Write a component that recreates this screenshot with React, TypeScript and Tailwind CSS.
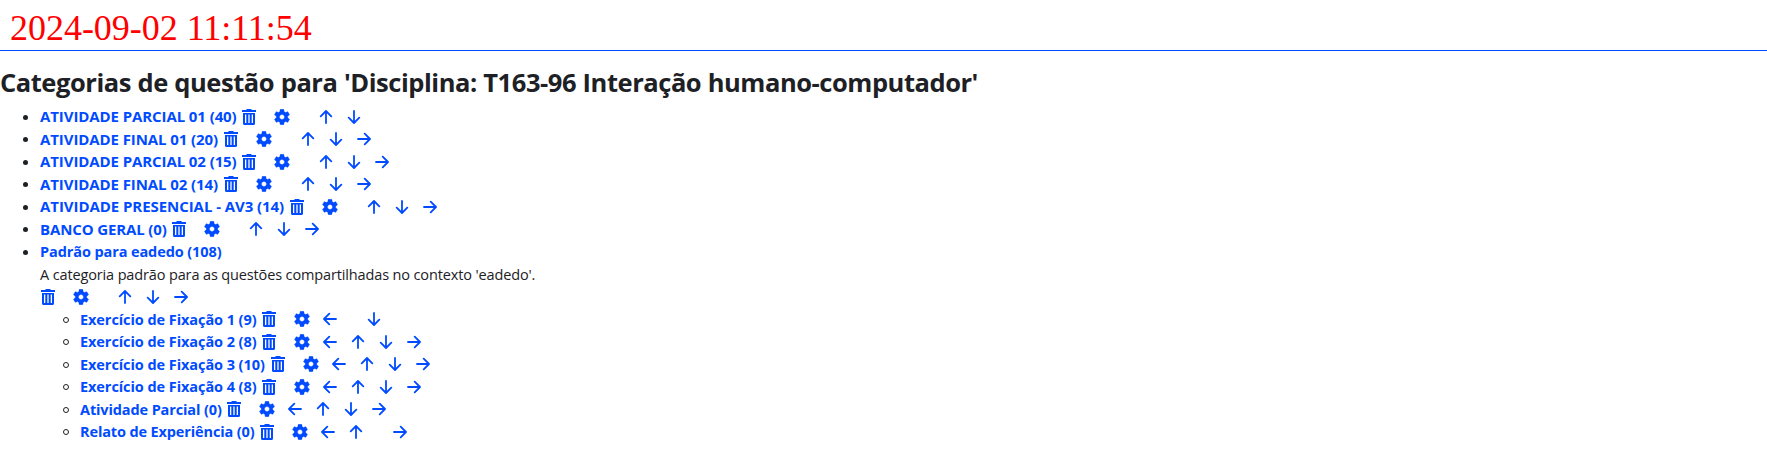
import React from "react";

const TRASH = "M4.500 0h5v1H14v2H0V1h4.500zM1 4h12v10.500a1.500 1.500 0 0 1-1.500 1.500h-9A1.500 1.500 0 0 1 1 14.500zM3 5.500V14H4.300V5.500zM6.350 5.500V14H7.650V5.500zM9.700 5.500V14H11V5.500z";
const GEAR = "M19.14 12.94c.04-.3.06-.61.06-.94 0-.32-.02-.64-.07-.94l2.030-1.580c.18-.14.23-.41.12-.61l-1.920-3.320c-.12-.22-.37-.29-.59-.22l-2.390.96c-.5-.38-1.030-.7-1.620-.94l-.36-2.540c-.04-.24-.24-.41-.48-.41h-3.840c-.24 0-.43.17-.47.41l-.36 2.540c-.59.24-1.130.57-1.620.94l-2.390-.96c-.22-.08-.47 0-.59.22L2.740 8.870c-.12.21-.08.47.12.61l2.030 1.580c-.05.3-.09.63-.09.94s.02.64.07.94l-2.030 1.580c-.18.14-.23.41-.12.61l1.920 3.320c.12.22.37.29.59.22l2.390-.96c.5.38 1.030.7 1.620.94l.36 2.540c.05.24.24.41.48.41h3.840c.24 0 .44-.17.47-.41l.36-2.540c.59-.24 1.130-.56 1.620-.94l2.390.96c.22.08.47 0 .59-.22l1.920-3.320c.12-.22.07-.47-.12-.61l-2.010-1.580zM12 15.100c-1.700 0-3.100-1.400-3.100-3.100s1.400-3.100 3.100-3.100 3.100 1.400 3.100 3.100-1.400 3.100-3.100 3.100z";

const ROTATION: Record<string, string> = {
  U: "",
  R: "rotate-90",
  D: "rotate-180",
  L: "-rotate-90",
};

/* Each move is U, D, L or R; "_" keeps the narrow gap of an unavailable move. */
function Actions({ moves }: { moves: string }) {
  return (
    <span className="flex h-full items-center text-[#004bff]">
      <span className="w-[26.5px] pl-px">
        <svg viewBox="0 0 14 16" className="h-[16px] w-[14px]" fill="currentColor" fillRule="evenodd">
          <path d={TRASH} />
        </svg>
      </span>
      <span className="mr-[0.5px] flex w-7 justify-center">
        <svg viewBox="2 2 20 20" className="h-[16px] w-[16px]" fill="currentColor" stroke="currentColor" strokeWidth="0.4">
          <path d={GEAR} />
        </svg>
      </span>
      {moves.split("").map((m, i) =>
        m === "_" ? (
          <span key={i} className="w-4" />
        ) : (
          <span key={i} className="flex w-7 justify-center">
            <svg viewBox="0 0 14 14" className={`h-3.5 w-3.5 ${ROTATION[m]}`} fill="none" stroke="currentColor" strokeWidth="1.8" strokeLinecap="round" strokeLinejoin="round">
              <path d="M7 13V1.200M1.700 6.300 7 1l5.300 5.300" />
            </svg>
          </span>
        ),
      )}
    </span>
  );
}

type Item = { label: string; box: string; moves?: string };

const MAIN: Item[] = [
  { label: "ATIVIDADE PARCIAL 01 (40)", box: "w-[201px] tracking-[-0.09px]", moves: "_UD" },
  { label: "ATIVIDADE FINAL 01 (20)", box: "w-[183px] tracking-[-0.09px]", moves: "_UDR" },
  { label: "ATIVIDADE PARCIAL 02 (15)", box: "w-[201px] tracking-[-0.09px]", moves: "_UDR" },
  { label: "ATIVIDADE FINAL 02 (14)", box: "w-[183px] tracking-[-0.09px]", moves: "_UDR" },
  { label: "ATIVIDADE PRESENCIAL - AV3 (14)", box: "w-[249px] tracking-[-0.06px]", moves: "_UDR" },
  { label: "BANCO GERAL (0)", box: "w-[131px] tracking-[-0.13px]", moves: "_UDR" },
  { label: "Padrão para eadedo (108)", box: "w-[187px] pt-[2px] text-[14.5px] tracking-[-0.1px]" },
];

const NESTED: Item[] = [
  { label: "Exercício de Fixação 1 (9)", box: "w-[181px] pt-[2px] text-[14.5px] tracking-[-0.07px]", moves: "L_D" },
  { label: "Exercício de Fixação 2 (8)", box: "w-[181px] pt-[2px] text-[14.5px] tracking-[-0.07px]", moves: "LUDR" },
  { label: "Exercício de Fixação 3 (10)", box: "w-[190px] pt-[2px] text-[14.5px] tracking-[-0.07px]", moves: "LUDR" },
  { label: "Exercício de Fixação 4 (8)", box: "w-[181px] pt-[2px] text-[14.5px] tracking-[-0.07px]", moves: "LUDR" },
  { label: "Atividade Parcial (0)", box: "w-[146px] pt-[2px] text-[14.5px] tracking-[-0.12px]", moves: "LUDR" },
  { label: "Relato de Experiência (0)", box: "w-[179px] pt-[2px] text-[14.5px] tracking-[-0.13px]", moves: "LU_R" },
];

function Row({ item, nested }: { item: Item; nested?: boolean }) {
  return (
    <li className="flex h-[22.5px] items-center">
      <span className="flex w-10 shrink-0 items-center pl-[23px] pt-px">
        <span className={nested ? "h-1.5 w-1.5 rounded-full border border-[#1d2125]" : "h-[5px] w-[5px] rounded-full bg-[#1d2125]"} />
      </span>
      <a className={`shrink-0 whitespace-nowrap font-bold text-[#004bff] ${item.box}`}>{item.label}</a>
      {item.moves && <Actions moves={item.moves} />}
    </li>
  );
}

export default function App() {
  return (
    <div className="h-[475px] w-full overflow-hidden bg-white font-['Open_Sans','Noto_Sans',sans-serif] text-[15px] leading-[22.5px] text-[#1d2125]">
      <header className="h-[51px] border-b border-[#004bff] pl-[10px] pt-[8px] font-['Liberation_Serif',serif] text-[36px] leading-[41px] tracking-[-0.03px] text-[#ff0000]">
        2024-09-02 11:11:54
      </header>
      <h2 className="mt-4 h-[38.4px] whitespace-nowrap text-[25.5px] font-bold leading-[31px] tracking-[-0.45px] [word-spacing:0.4px]">
        Categorias de questão para 'Disciplina: T163-96 Interação humano-computador'
      </h2>
      <ul>
        {MAIN.map((item) => (
          <Row key={item.label} item={item} />
        ))}
      </ul>
      <div className="pl-10">
        <p className="h-[22.5px] whitespace-nowrap pt-px text-[14.5px] tracking-[-0.135px]">A categoria padrão para as questões compartilhadas no contexto 'eadedo'.</p>
        <div className="h-[22.5px]">
          <Actions moves="_UDR" />
        </div>
        <ul>
          {NESTED.map((item) => (
            <Row key={item.label} item={item} nested />
          ))}
        </ul>
      </div>
    </div>
  );
}
